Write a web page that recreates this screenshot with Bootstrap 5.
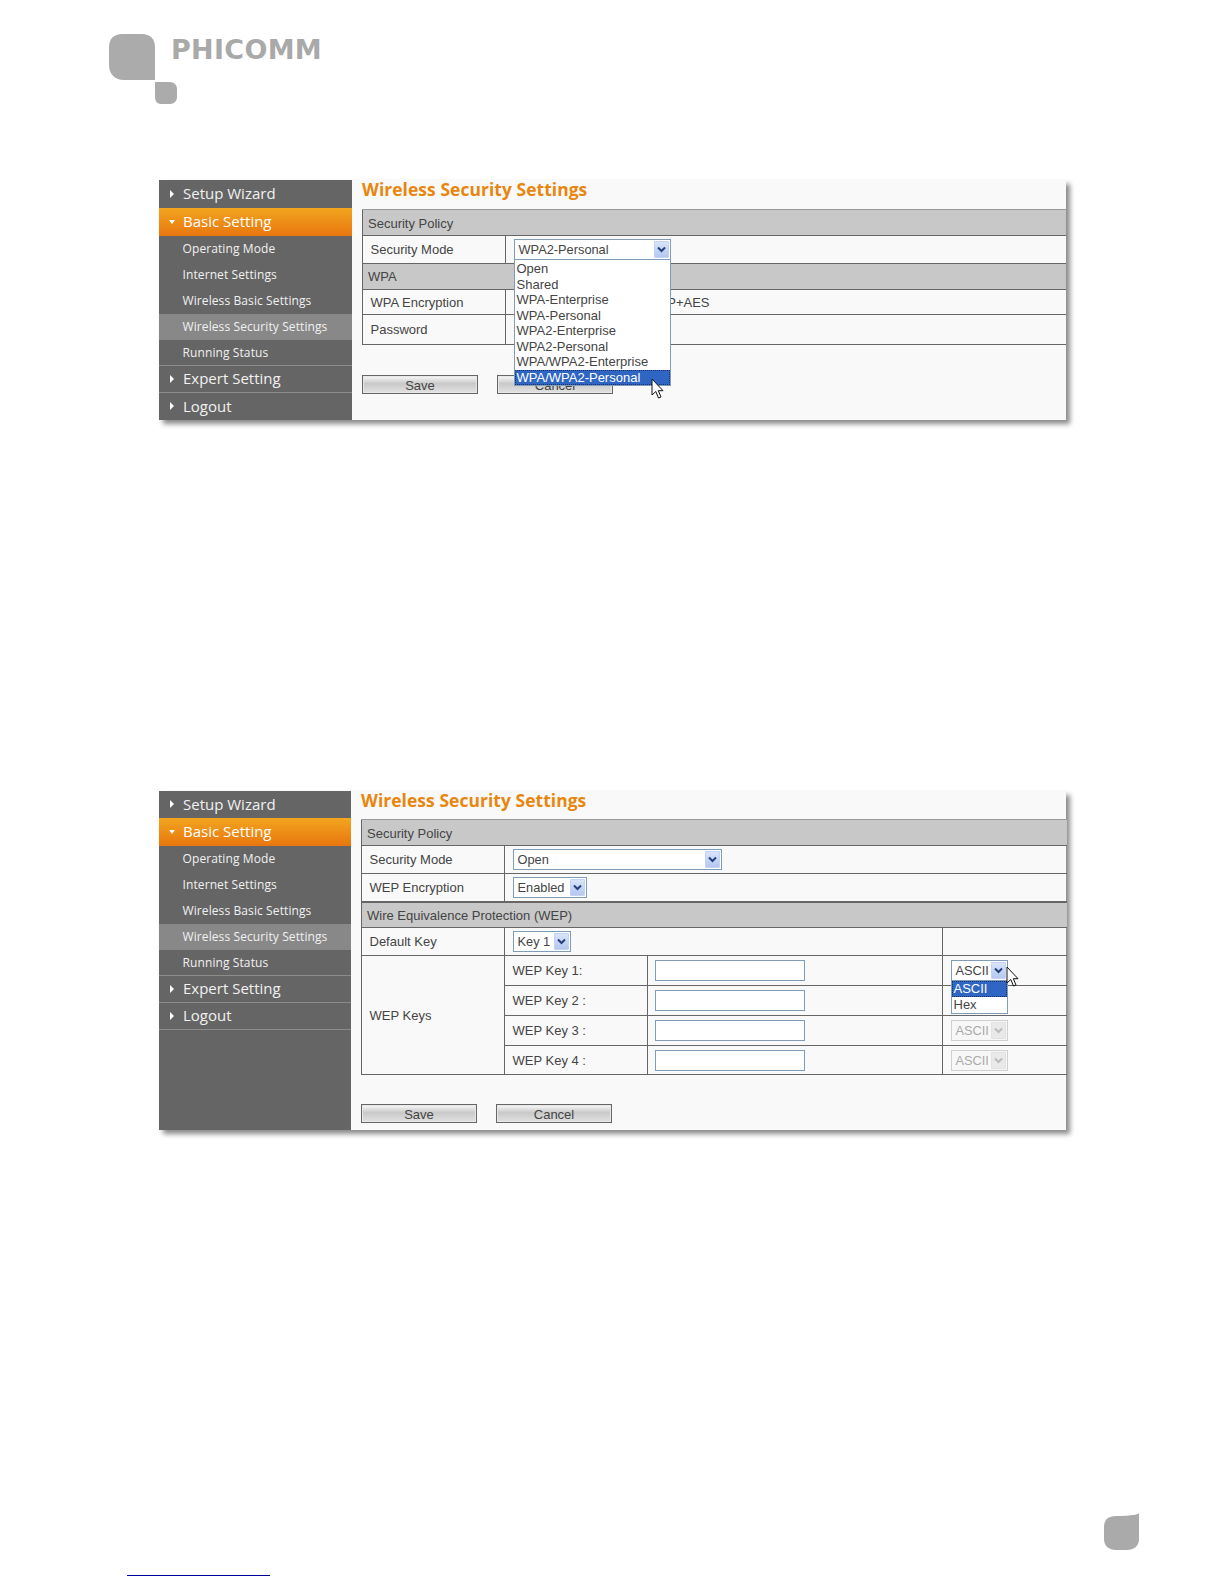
<!DOCTYPE html>
<html lang="en">
<head>
<meta charset="utf-8">
<title>Wireless Security Settings</title>
<link href="https://cdn.jsdelivr.net/npm/bootstrap@5.3.0/dist/css/bootstrap.min.css" rel="stylesheet">
<style>
html,body{background:#fff;margin:0;}
.sheet{width:1224px;height:1584px;overflow:hidden;background:#fff;font-family:"Liberation Sans",Arial,sans-serif;font-size:13px;color:#444;}
.logo-row{padding:34px 0 0 109px;height:104px;}
.logo-word{font-family:"DejaVu Sans",sans-serif;font-weight:700;font-size:27px;line-height:1;letter-spacing:.3px;color:#a9a9a9;margin:2px 0 0 -6px;}
.panel{width:907px;margin-left:159px;background:#f9f9f9;box-shadow:4px 4px 5px #8a8a8a;}
.panel-a{height:240px;margin-top:76px;}
.panel-b{height:339px;margin-top:371px;}
.side{background:#656565;font-family:"Open Sans","Noto Sans",sans-serif;flex:none;}
.panel-a .side{width:193px;}
.panel-b .side{width:192px;}
.menu-top,.menu-sub{display:flex;align-items:center;color:#f1f1f1;text-decoration:none;}
.menu-top{font-size:15px;letter-spacing:0;padding:0 0 1px 10px;gap:8px;border-bottom:1px solid #8c8c8c;}
.menu-sub{font-size:12px;letter-spacing:.1px;padding-left:23.5px;}
.menu-sub.last{border-bottom:1px solid #8c8c8c;}
.menu-top.on{background:linear-gradient(#f2a51f,#e8760f);border-bottom:0;color:#fff;}
.menu-sub.on{background:#888;}
.no-line{border-bottom:0;}
.h25{height:25px}.h26{height:26px}.h27{height:27px}.h28{height:28px}
.tri-box{width:6px;flex:none;display:block;}
.main-col{flex:1 1 auto;min-width:0;padding-left:10px;}
.page-title{font-family:"Open Sans","Noto Sans",sans-serif;font-weight:700;font-size:17.4px;line-height:18px;color:#e8860f;letter-spacing:.08px;margin:0;height:29px;}
.panel-b .page-title{height:28px;}
.grid-t{table-layout:fixed;border-collapse:collapse;margin:0;color:#444;background:transparent;--bs-table-bg:transparent;}
.grid-t td{padding:0 0 0 7.5px;border:1px solid #666;border-right:0;vertical-align:middle;font-size:13px;line-height:15px;color:#444;background:transparent;box-shadow:none;}
.grid-t td.hd{background:#c8c8c8;padding:2px 0 0 5px;border-top-color:#999;}
.grid-t td.hd-tight{padding-top:0;}
.grid-t td.enc-cell{padding-left:141px;}
.grid-t td.key-cell{padding-left:7px;}
.panel-a .grid-t{width:704px;}
.panel-b .grid-t{width:705px;}
.c1{width:143px}.c2{width:143px}.c3{width:295px}.c4{width:124px}
.r26{height:26px}.r28{height:28px}.r25{height:25px}.r30{height:30px}.r29{height:29px}
.grid-t td.thick{border-bottom:2px solid #666;}
.fake-sel{display:flex;align-items:center;justify-content:space-between;height:21px;background:#fff;border:1px solid #7f9db9;padding:0 1px 0 4px;font-size:12.8px;line-height:15px;color:#444;}
.fake-sel.off{border-color:#d0d0d0;color:#aaa;background:#f7f7f7;}
.sel-a{width:157px;}.sel-b{width:209px;}.sel-c{width:74px;}.sel-d{width:58px;}.sel-e{width:57px;}
.arr{width:15px;height:17px;flex:none;display:flex;align-items:center;justify-content:center;background:linear-gradient(#d8e4fb,#b4c7f2);border:1px solid #c4d3f3;border-radius:1px;}
.off .arr{background:#e9e9e9;border-color:#e2e2e2;}
.pop{position:absolute;left:0;background:#fff;border:1px solid #7f9db9;border-top:0;z-index:5;font-size:13px;color:#444;}
.pop div{padding-left:2px;white-space:nowrap;}
.pop-a{top:21px;width:157px;padding-top:1px;}
.pop-a div{height:15.5px;line-height:15.5px;}
.pop-e{top:21px;width:57px;}
.pop-e div{height:16px;line-height:16px;}
.pop .hi{background:#2f66c4;color:#fff;outline:1px dotted #16326a;outline-offset:-1px;}
.anch{position:relative;}
.cursor{position:absolute;z-index:6;display:block;}
.cur-a{left:137px;top:139px;}
.cur-e{left:55px;top:6px;}
.key-in{display:block;width:150px;height:21px;border:1px solid #7f9db9;border-radius:0;padding:0;background:#fff;box-shadow:none;}
.act-row{margin-top:30px;gap:19px;}
.panel-b .act-row{margin-top:29px;}
.flat-btn{width:116px;height:19px;padding:2px 0 0;border:1px solid #666;border-radius:0;background:linear-gradient(#fafafa,#c9c9c9 45%,#e2e2e2);box-shadow:inset 0 0 0 1px #e8e8e8;font-family:"Liberation Sans",sans-serif;font-size:13px;line-height:16px;color:#444;}
.foot{height:37px;margin-top:383px;padding-left:1104px;}
.rule-link{width:143px;height:1px;background:#0000a0;margin:25px 0 0 127px;}
</style>
</head>
<body>
<div class="sheet">
  <header class="logo-row d-flex align-items-start">
    <svg width="68" height="71" viewBox="0 0 68 71" aria-hidden="true"><path d="M13 0H33C41 0 46 5 46 13V46H15C6 46 0 40 0 31V13C0 5 5 0 13 0Z" fill="#ababab"/><path d="M46 48H61C65 48 68 51 68 55V63C68 67 65 70 61 70H52C48 70 46 67 46 63Z" fill="#ababab"/></svg>
    <div class="logo-word">PHICOMM</div>
  </header>

  <section class="panel panel-a d-flex">
    <nav class="side d-flex flex-column">
      <a class="menu-top h28 no-line" href="#"><svg class="tri-box" viewBox="0 0 6 8" height="8" aria-hidden="true"><path d="M1 0L5 4L1 8Z" fill="#fff"/></svg>Setup Wizard</a>
      <a class="menu-top on h28" href="#"><svg class="tri-box" viewBox="0 0 6 8" height="8" aria-hidden="true"><path d="M0 2H6L3 6Z" fill="#fff"/></svg>Basic Setting</a>
      <a class="menu-sub h26" href="#">Operating Mode</a>
      <a class="menu-sub h26" href="#">Internet Settings</a>
      <a class="menu-sub h26" href="#">Wireless Basic Settings</a>
      <a class="menu-sub on h26" href="#">Wireless Security Settings</a>
      <a class="menu-sub last h26" href="#">Running Status</a>
      <a class="menu-top h27" href="#"><svg class="tri-box" viewBox="0 0 6 8" height="8" aria-hidden="true"><path d="M1 0L5 4L1 8Z" fill="#fff"/></svg>Expert Setting</a>
      <a class="menu-top no-line h27" href="#"><svg class="tri-box" viewBox="0 0 6 8" height="8" aria-hidden="true"><path d="M1 0L5 4L1 8Z" fill="#fff"/></svg>Logout</a>
    </nav>
    <div class="main-col">
      <h2 class="page-title">Wireless Security Settings</h2>
      <table class="table grid-t">
        <colgroup><col class="c1"><col></colgroup>
        <tr class="r26"><td class="hd" colspan="2">Security Policy</td></tr>
        <tr class="r28"><td>Security Mode</td><td>
          <div class="anch sel-a">
            <div class="fake-sel sel-a"><span>WPA2-Personal</span><span class="arr"><svg width="9" height="7" viewBox="0 0 9 7" aria-hidden="true"><path d="M1 1.5L4.5 5L8 1.5" fill="none" stroke="#24407c" stroke-width="2"/></svg></span></div>
            <div class="pop pop-a">
              <div>Open</div><div>Shared</div><div>WPA-Enterprise</div><div>WPA-Personal</div><div>WPA2-Enterprise</div><div>WPA2-Personal</div><div>WPA/WPA2-Enterprise</div><div class="hi">WPA/WPA2-Personal</div>
            </div>
            <svg class="cursor cur-a" width="13" height="22" viewBox="0 0 13 22" aria-hidden="true"><path d="M1 1V17L4.8 13.5L7.5 20L10 19L7.3 12.7H12Z" fill="#fff" stroke="#111" stroke-width="1"/></svg>
          </div>
        </td></tr>
        <tr class="r26"><td class="hd hd-tight" colspan="2">WPA</td></tr>
        <tr class="r25"><td>WPA Encryption</td><td class="enc-cell">TKIP+AES</td></tr>
        <tr class="r30"><td>Password</td><td></td></tr>
      </table>
      <div class="d-flex act-row">
        <button type="button" class="btn flat-btn">Save</button>
        <button type="button" class="btn flat-btn">Cancel</button>
      </div>
    </div>
  </section>

  <section class="panel panel-b d-flex">
    <nav class="side d-flex flex-column">
      <a class="menu-top h27 no-line" href="#"><svg class="tri-box" viewBox="0 0 6 8" height="8" aria-hidden="true"><path d="M1 0L5 4L1 8Z" fill="#fff"/></svg>Setup Wizard</a>
      <a class="menu-top on h28" href="#"><svg class="tri-box" viewBox="0 0 6 8" height="8" aria-hidden="true"><path d="M0 2H6L3 6Z" fill="#fff"/></svg>Basic Setting</a>
      <a class="menu-sub h26" href="#">Operating Mode</a>
      <a class="menu-sub h26" href="#">Internet Settings</a>
      <a class="menu-sub h26" href="#">Wireless Basic Settings</a>
      <a class="menu-sub on h26" href="#">Wireless Security Settings</a>
      <a class="menu-sub last h26" href="#">Running Status</a>
      <a class="menu-top h27" href="#"><svg class="tri-box" viewBox="0 0 6 8" height="8" aria-hidden="true"><path d="M1 0L5 4L1 8Z" fill="#fff"/></svg>Expert Setting</a>
      <a class="menu-top h27" href="#"><svg class="tri-box" viewBox="0 0 6 8" height="8" aria-hidden="true"><path d="M1 0L5 4L1 8Z" fill="#fff"/></svg>Logout</a>
    </nav>
    <div class="main-col">
      <h2 class="page-title">Wireless Security Settings</h2>
      <table class="table grid-t">
        <colgroup><col class="c1"><col class="c2"><col class="c3"><col class="c4"></colgroup>
        <tr class="r26"><td class="hd" colspan="4">Security Policy</td></tr>
        <tr class="r28"><td>Security Mode</td><td colspan="3">
          <div class="fake-sel sel-b"><span>Open</span><span class="arr"><svg width="9" height="7" viewBox="0 0 9 7" aria-hidden="true"><path d="M1 1.5L4.5 5L8 1.5" fill="none" stroke="#24407c" stroke-width="2"/></svg></span></div>
        </td></tr>
        <tr class="r28"><td class="thick">WEP Encryption</td><td class="thick" colspan="3">
          <div class="fake-sel sel-c"><span>Enabled</span><span class="arr"><svg width="9" height="7" viewBox="0 0 9 7" aria-hidden="true"><path d="M1 1.5L4.5 5L8 1.5" fill="none" stroke="#24407c" stroke-width="2"/></svg></span></div>
        </td></tr>
        <tr class="r26"><td class="hd" colspan="4">Wire Equivalence Protection (WEP)</td></tr>
        <tr class="r28"><td>Default Key</td><td colspan="2">
          <div class="fake-sel sel-d"><span>Key 1</span><span class="arr"><svg width="9" height="7" viewBox="0 0 9 7" aria-hidden="true"><path d="M1 1.5L4.5 5L8 1.5" fill="none" stroke="#24407c" stroke-width="2"/></svg></span></div>
        </td><td></td></tr>
        <tr class="r30"><td rowspan="4">WEP Keys</td><td>WEP Key 1:</td><td class="key-cell"><input class="form-control key-in" type="text" aria-label="WEP Key 1"></td><td>
          <div class="anch sel-e">
            <div class="fake-sel sel-e"><span>ASCII</span><span class="arr"><svg width="9" height="7" viewBox="0 0 9 7" aria-hidden="true"><path d="M1 1.5L4.5 5L8 1.5" fill="none" stroke="#24407c" stroke-width="2"/></svg></span></div>
            <div class="pop pop-e"><div class="hi">ASCII</div><div>Hex</div></div>
            <svg class="cursor cur-e" width="13" height="22" viewBox="0 0 13 22" aria-hidden="true"><path d="M1 1V17L4.8 13.5L7.5 20L10 19L7.3 12.7H12Z" fill="#fff" stroke="#111" stroke-width="1"/></svg>
          </div>
        </td></tr>
        <tr class="r30"><td>WEP Key 2 :</td><td class="key-cell"><input class="form-control key-in" type="text" aria-label="WEP Key 2"></td><td></td></tr>
        <tr class="r30"><td>WEP Key 3 :</td><td class="key-cell"><input class="form-control key-in" type="text" aria-label="WEP Key 3"></td><td>
          <div class="fake-sel sel-e off"><span>ASCII</span><span class="arr"><svg width="9" height="7" viewBox="0 0 9 7" aria-hidden="true"><path d="M1 1.5L4.5 5L8 1.5" fill="none" stroke="#bbb" stroke-width="2"/></svg></span></div>
        </td></tr>
        <tr class="r29"><td>WEP Key 4 :</td><td class="key-cell"><input class="form-control key-in" type="text" aria-label="WEP Key 4"></td><td>
          <div class="fake-sel sel-e off"><span>ASCII</span><span class="arr"><svg width="9" height="7" viewBox="0 0 9 7" aria-hidden="true"><path d="M1 1.5L4.5 5L8 1.5" fill="none" stroke="#bbb" stroke-width="2"/></svg></span></div>
        </td></tr>
      </table>
      <div class="d-flex act-row">
        <button type="button" class="btn flat-btn">Save</button>
        <button type="button" class="btn flat-btn">Cancel</button>
      </div>
    </div>
  </section>

  <footer>
    <div class="foot"><svg class="d-block" width="35" height="37" viewBox="0 0 35 37" aria-hidden="true"><path d="M35 0C34 1 30 3 12 3C4 3 0 7 0 14V26C0 33 5 37 12 37H23C30 37 35 33 35 26Z" fill="#aaa"/></svg></div>
    <div class="rule-link"></div>
  </footer>
</div>
<script src="https://cdn.jsdelivr.net/npm/bootstrap@5.3.0/dist/js/bootstrap.bundle.min.js"></script>
</body>
</html>
